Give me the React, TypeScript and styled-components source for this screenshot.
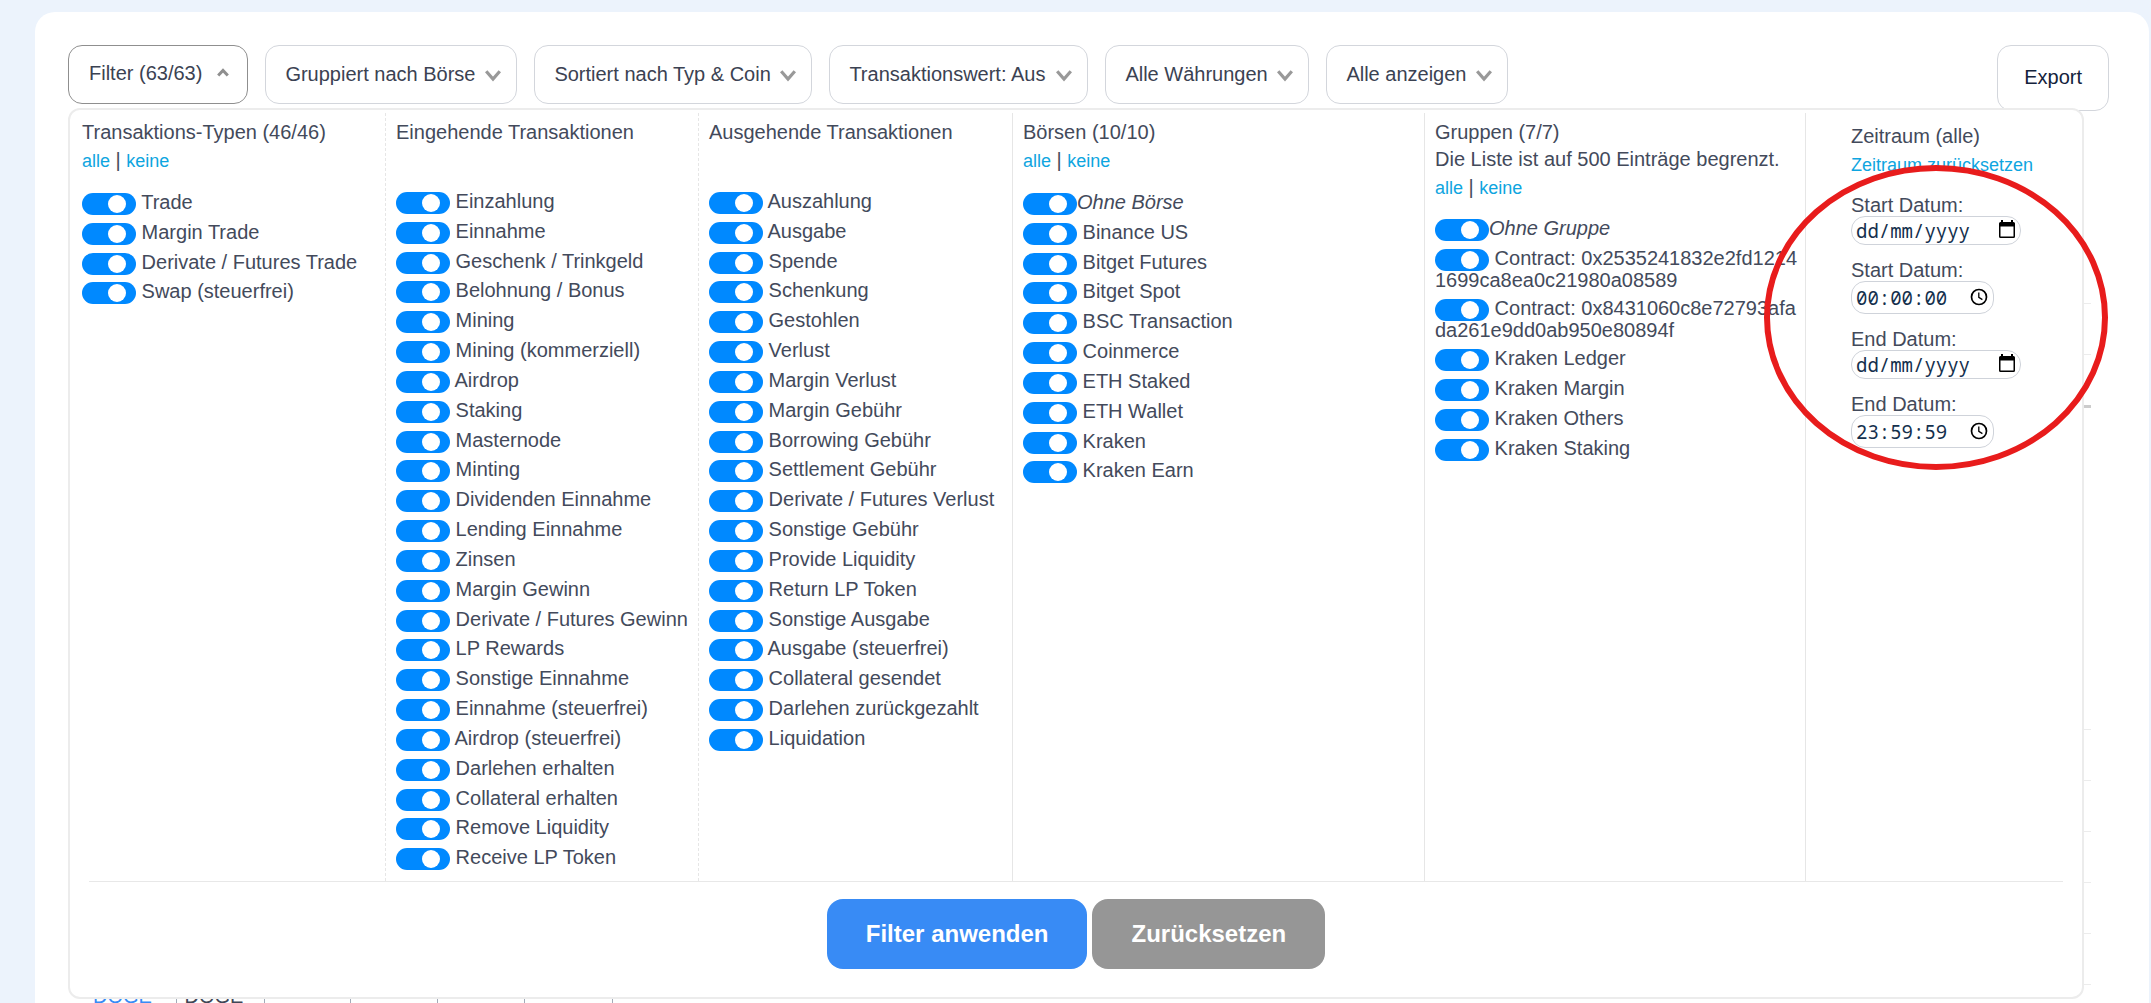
import React, { useId } from "react";
import styled, { createGlobalStyle, css } from "styled-components";

const GlobalStyle = createGlobalStyle`
  *, *::before, *::after { box-sizing: border-box; }
  body {
    margin: 0;
    background: #ecf3fc;
    color: #434a5b;
    font-family: "Liberation Sans", Arial, sans-serif;
    font-size: 20px;
    line-height: 22px;
  }
  button, input, select { font: inherit; color: inherit; margin: 0; }
`;

const Page = styled.div`
  height: 100vh;
  padding: 12px 2px 0 35px;
  overflow: hidden;
`;

const Panel = styled.main`
  min-height: 100vh;
  padding: 33px 40px 0 33px;
  background: #fff;
  border-radius: 20px;
`;

const Content = styled.div`
  position: relative;
`;

const Toolbar = styled.div`
  display: flex;
  align-items: flex-start;
  gap: 17px;
`;

const control = css`
  height: 59px;
  border: 1px solid #d3d6dc;
  border-radius: 14px;
  background: #fff;
  color: #3b4252;
  font-size: 20px;
  cursor: pointer;
`;

const FilterButton = styled.button`
  ${control}
  display: flex;
  align-items: center;
  gap: 15px;
  padding: 0 18px 4px 20px;
  border-color: #8f8f8f;
`;

const SelectBox = styled.div`
  position: relative;
  display: flex;
`;

const Select = styled.select`
  ${control}
  appearance: none;
  padding: 0 40px 2px 19px;
`;

const SelectArrow = styled.svg`
  position: absolute;
  right: 16px;
  top: 25px;
  pointer-events: none;
`;

const ExportButton = styled.button`
  ${control}
  height: 66px;
  margin-left: auto;
  padding: 0 26px 2px;
  color: #14233c;
`;

const Results = styled.table`
  width: calc(100% - 35px);
  margin: 125px 18px 0 17px;
  border-collapse: collapse;
  table-layout: fixed;
`;

const ResultRow = styled.tr<{ $height: number; $line?: string }>`
  height: ${(p) => p.$height}px;
  border-bottom: ${(p) => p.$line ?? "1px solid #ececec"};
`;

const CoinCell = styled.td`
  padding: 0 0 0 8px;
  border-right: 1px solid #a3abb8;
  vertical-align: top;
  color: #3f4756;
  a { color: #388bf5; text-decoration: none; }
`;

const FilterPanel = styled.form`
  position: absolute;
  top: 63px;
  left: 0;
  right: 25px;
  border: 2px solid #ececec;
  border-radius: 12px;
  background: #fff;
  padding: 3px 0 28px;
`;

const Columns = styled.div`
  display: grid;
  grid-template-columns: 315fr 313fr 314fr 412fr 381fr 277fr;
`;

const Column = styled.section<{ $edge: "none" | "dashed" | "solid"; $date?: boolean }>`
  min-width: 0;
  padding: ${(p) => (p.$date ? "10px 0 4px 45px" : "6px 4px 4px 10px")};
  border-left: 1px ${(p) => p.$edge} #e6e6e6;
  ${(p) => p.$edge === "none" && "padding-left: 12px;"}
`;

const Title = styled.h2`
  margin: 0;
  font-size: 20px;
  font-weight: 400;
  line-height: 27px;
  white-space: nowrap;
`;

const Links = styled.div<{ $tight?: boolean }>`
  min-height: 27px;
  margin-bottom: ${(p) => (p.$tight ? 16 : 17)}px;
  line-height: 28px;
  a { font-size: 18px; line-height: 22px; color: #0ea5e0; text-decoration: none; }
`;

const List = styled.ul<{ $rows?: number }>`
  margin: 0;
  padding: 0;
  list-style: none;
  ${(p) =>
    p.$rows &&
    css`
      display: grid;
      height: 686px;
      grid-template-rows: repeat(${p.$rows}, minmax(0, 1fr));
    `}
`;

const Item = styled.li<{ $height?: number }>`
  height: ${(p) => (p.$height ? `${p.$height}px` : "auto")};
  min-height: 0;
  word-break: break-all;
`;

const Switch = styled.input`
  appearance: none;
  display: inline-block;
  width: 54px;
  height: 22px;
  margin: 0 0 -2px;
  padding: 2px 0 0 26px;
  border-radius: 11px;
  background: #b8bec8;
  vertical-align: -4px;
  cursor: pointer;
  &:checked { background: #0089ff; }
  &::before {
    content: "";
    display: block;
    width: 18px;
    height: 18px;
    border-radius: 50%;
    background: #fff;
  }
`;

const Field = styled.div`
  margin-bottom: 14px;
  label { display: block; }
`;

const InputBox = styled.div<{ $time?: boolean }>`
  position: relative;
  width: ${(p) => (p.$time ? 143 : 170)}px;
`;

const DateInput = styled.input<{ $time?: boolean }>`
  display: block;
  width: 100%;
  height: ${(p) => (p.$time ? 33 : 29)}px;
  padding: 0 4px;
  border: 1px solid #cfd3da;
  border-radius: 14px;
  background: #fff;
  font-family: "Noto Sans Mono", "DejaVu Sans Mono", monospace;
  font-size: 19px;
  color: #14304d;
  &::placeholder { color: #14304d; opacity: 1; }
`;

const InputIcon = styled.svg<{ $time?: boolean }>`
  position: absolute;
  top: ${(p) => (p.$time ? 7 : 4)}px;
  right: 6px;
`;

const Marker = styled.svg`
  position: absolute;
  top: 55px;
  right: -26px;
  width: 344px;
  height: 305px;
  pointer-events: none;
`;

const Actions = styled.div`
  display: flex;
  justify-content: center;
  gap: 5px;
  margin: 0 19px;
  padding-top: 17px;
  border-top: 1px solid #e8e8e8;
`;

const ActionButton = styled.button<{ $muted?: boolean }>`
  height: 70px;
  padding: 0 39px;
  border: 0;
  border-radius: 16px;
  background: ${(p) => (p.$muted ? "#969696" : "#388bf5")};
  color: #fff;
  font-size: 24px;
  font-weight: 700;
  cursor: pointer;
`;

const selects = [
  ["Gruppierung", "Gruppiert nach Börse"],
  ["Sortierung", "Sortiert nach Typ & Coin"],
  ["Transaktionswert", "Transaktionswert: Aus"],
  ["Währungen", "Alle Währungen"],
  ["Anzeige", "Alle anzeigen"],
];

const types = ["Trade", "Margin Trade", "Derivate / Futures Trade", "Swap (steuerfrei)"];
const incoming = [
  "Einzahlung", "Einnahme", "Geschenk / Trinkgeld", "Belohnung / Bonus", "Mining",
  "Mining (kommerziell)", "Airdrop", "Staking", "Masternode", "Minting",
  "Dividenden Einnahme", "Lending Einnahme", "Zinsen", "Margin Gewinn",
  "Derivate / Futures Gewinn", "LP Rewards", "Sonstige Einnahme", "Einnahme (steuerfrei)",
  "Airdrop (steuerfrei)", "Darlehen erhalten", "Collateral erhalten", "Remove Liquidity",
  "Receive LP Token",
];
const outgoing = [
  "Auszahlung", "Ausgabe", "Spende", "Schenkung", "Gestohlen", "Verlust", "Margin Verlust",
  "Margin Gebühr", "Borrowing Gebühr", "Settlement Gebühr", "Derivate / Futures Verlust",
  "Sonstige Gebühr", "Provide Liquidity", "Return LP Token", "Sonstige Ausgabe",
  "Ausgabe (steuerfrei)", "Collateral gesendet", "Darlehen zurückgezahlt", "Liquidation",
];
const exchanges = [
  "Ohne Börse", "Binance US", "Bitget Futures", "Bitget Spot", "BSC Transaction",
  "Coinmerce", "ETH Staked", "ETH Wallet", "Kraken", "Kraken Earn",
];
const groups = [
  "Ohne Gruppe",
  "Contract: 0x2535241832e2fd12141699ca8ea0c21980a08589",
  "Contract: 0x8431060c8e72793afada261e9dd0ab950e80894f",
  "Kraken Ledger", "Kraken Margin", "Kraken Others", "Kraken Staking",
];

function AllOrNone({ tight }: { tight?: boolean }) {
  return (
    <Links $tight={tight}>
      <a href="#alle">alle</a> | <a href="#keine">keine</a>
    </Links>
  );
}

function Toggles({ items, rows }: { items: string[]; rows?: number }) {
  const id = useId();
  return (
    <List $rows={rows}>
      {items.map((name, i) => (
        <Item key={name} $height={rows ? undefined : name.startsWith("Contract") ? 50 : 30}>
          <Switch type="checkbox" id={`${id}-${i}`} defaultChecked />
          {name.startsWith("Ohne") ? (
            <label htmlFor={`${id}-${i}`}><em>{name}</em></label>
          ) : (
            <label htmlFor={`${id}-${i}`}> {name}</label>
          )}
        </Item>
      ))}
    </List>
  );
}

function DateField({ label, time }: { label: string; time?: string }) {
  const id = useId();
  return (
    <Field>
      <label htmlFor={id}>{label}</label>
      <InputBox $time={!!time}>
        <DateInput id={id} type="text" $time={!!time} defaultValue={time} placeholder="dd/mm/yyyy" />
        {time ? (
          <InputIcon $time width="18" height="18" viewBox="0 0 18 18" fill="none" stroke="#000">
            <circle cx="9" cy="9" r="7.5" strokeWidth="1.7" />
            <path d="M8.8 4.6v4.8l3.6 2.2" strokeWidth="1.3" />
          </InputIcon>
        ) : (
          <InputIcon width="16" height="19" viewBox="0 0 16 19" fill="#000">
            <path d="M2 0h2v2h8V0h2v2h.500Q16 2 16 3.500v13Q16 18 14.500 18h-13Q0 18 0 16.500v-13Q0 2 1.500 2H2zM1.500 6.500v10h13v-10z" fillRule="evenodd" />
          </InputIcon>
        )}
      </InputBox>
    </Field>
  );
}

export default function App() {
  const rows = 23;
  return (
    <Page>
      <GlobalStyle />
      <Panel>
        <Content>
          <Toolbar>
            <FilterButton type="button">
              Filter (63/63)
              <svg width="12" height="9" viewBox="0 0 12 9" fill="none" stroke="#8f8f8f" strokeWidth="3">
                <path d="M1.200 7.500 6 2.500l4.800 5" />
              </svg>
            </FilterButton>
            {selects.map(([name, value]) => (
              <SelectBox key={name}>
                <Select aria-label={name}>
                  <option>{value}</option>
                </Select>
                <SelectArrow width="16" height="12" viewBox="0 0 16 12" fill="none" stroke="#999" strokeWidth="3.200">
                  <path d="M1.200 1.200 8 9l6.800-7.800" />
                </SelectArrow>
              </SelectBox>
            ))}
            <ExportButton type="button">Export</ExportButton>
          </Toolbar>

          <Results>
            <colgroup>
              <col width="91" />
              <col width="88" />
              <col width="86" />
              <col width="87" />
              <col width="87" />
              <col width="88" />
              <col />
            </colgroup>
            <tbody>
              <ResultRow $height={67}><td colSpan={7} /></ResultRow>
              <ResultRow $height={51}><td colSpan={7} /></ResultRow>
              <ResultRow $height={52} $line="3px solid #cccccc"><td colSpan={7} /></ResultRow>
              <ResultRow $height={323}><td colSpan={7} /></ResultRow>
              {[1, 2, 3, 4, 5].map((n) => (
                <ResultRow key={n} $height={51}><td colSpan={7} /></ResultRow>
              ))}
              <ResultRow $height={51}>
                <CoinCell><a href="#doge">DOGE</a></CoinCell>
                <CoinCell>DOGE</CoinCell>
                <CoinCell />
                <CoinCell />
                <CoinCell />
                <CoinCell />
                <td />
              </ResultRow>
            </tbody>
          </Results>

          <FilterPanel onSubmit={(e) => e.preventDefault()}>
            <Columns>
              <Column $edge="none">
                <Title>Transaktions-Typen (46/46)</Title>
                <AllOrNone />
                <Toggles items={types} rows={rows} />
              </Column>
              <Column $edge="dashed">
                <Title>Eingehende Transaktionen</Title>
                <Links />
                <Toggles items={incoming} rows={rows} />
              </Column>
              <Column $edge="dashed">
                <Title>Ausgehende Transaktionen</Title>
                <Links />
                <Toggles items={outgoing} rows={rows} />
              </Column>
              <Column $edge="solid">
                <Title>Börsen (10/10)</Title>
                <AllOrNone />
                <Toggles items={exchanges} rows={rows} />
              </Column>
              <Column $edge="solid">
                <Title>
                  Gruppen (7/7)
                  <br />
                  Die Liste ist auf 500 Einträge begrenzt.
                </Title>
                <AllOrNone tight />
                <Toggles items={groups} />
              </Column>
              <Column $edge="solid" $date>
                <Title>Zeitraum (alle)</Title>
                <Links $tight><a href="#reset">Zeitraum zurücksetzen</a></Links>
                <DateField label="Start Datum:" />
                <DateField label="Start Datum:" time="00:00:00" />
                <DateField label="End Datum:" />
                <DateField label="End Datum:" time="23:59:59" />
              </Column>
            </Columns>
            <Actions>
              <ActionButton type="submit">Filter anwenden</ActionButton>
              <ActionButton type="reset" $muted>Zurücksetzen</ActionButton>
            </Actions>
            <Marker viewBox="0 0 344 305" fill="none" stroke="#e81c1c" strokeWidth="6">
              <ellipse cx="172" cy="152.500" rx="169" ry="149.500" />
            </Marker>
          </FilterPanel>
        </Content>
      </Panel>
    </Page>
  );
}
